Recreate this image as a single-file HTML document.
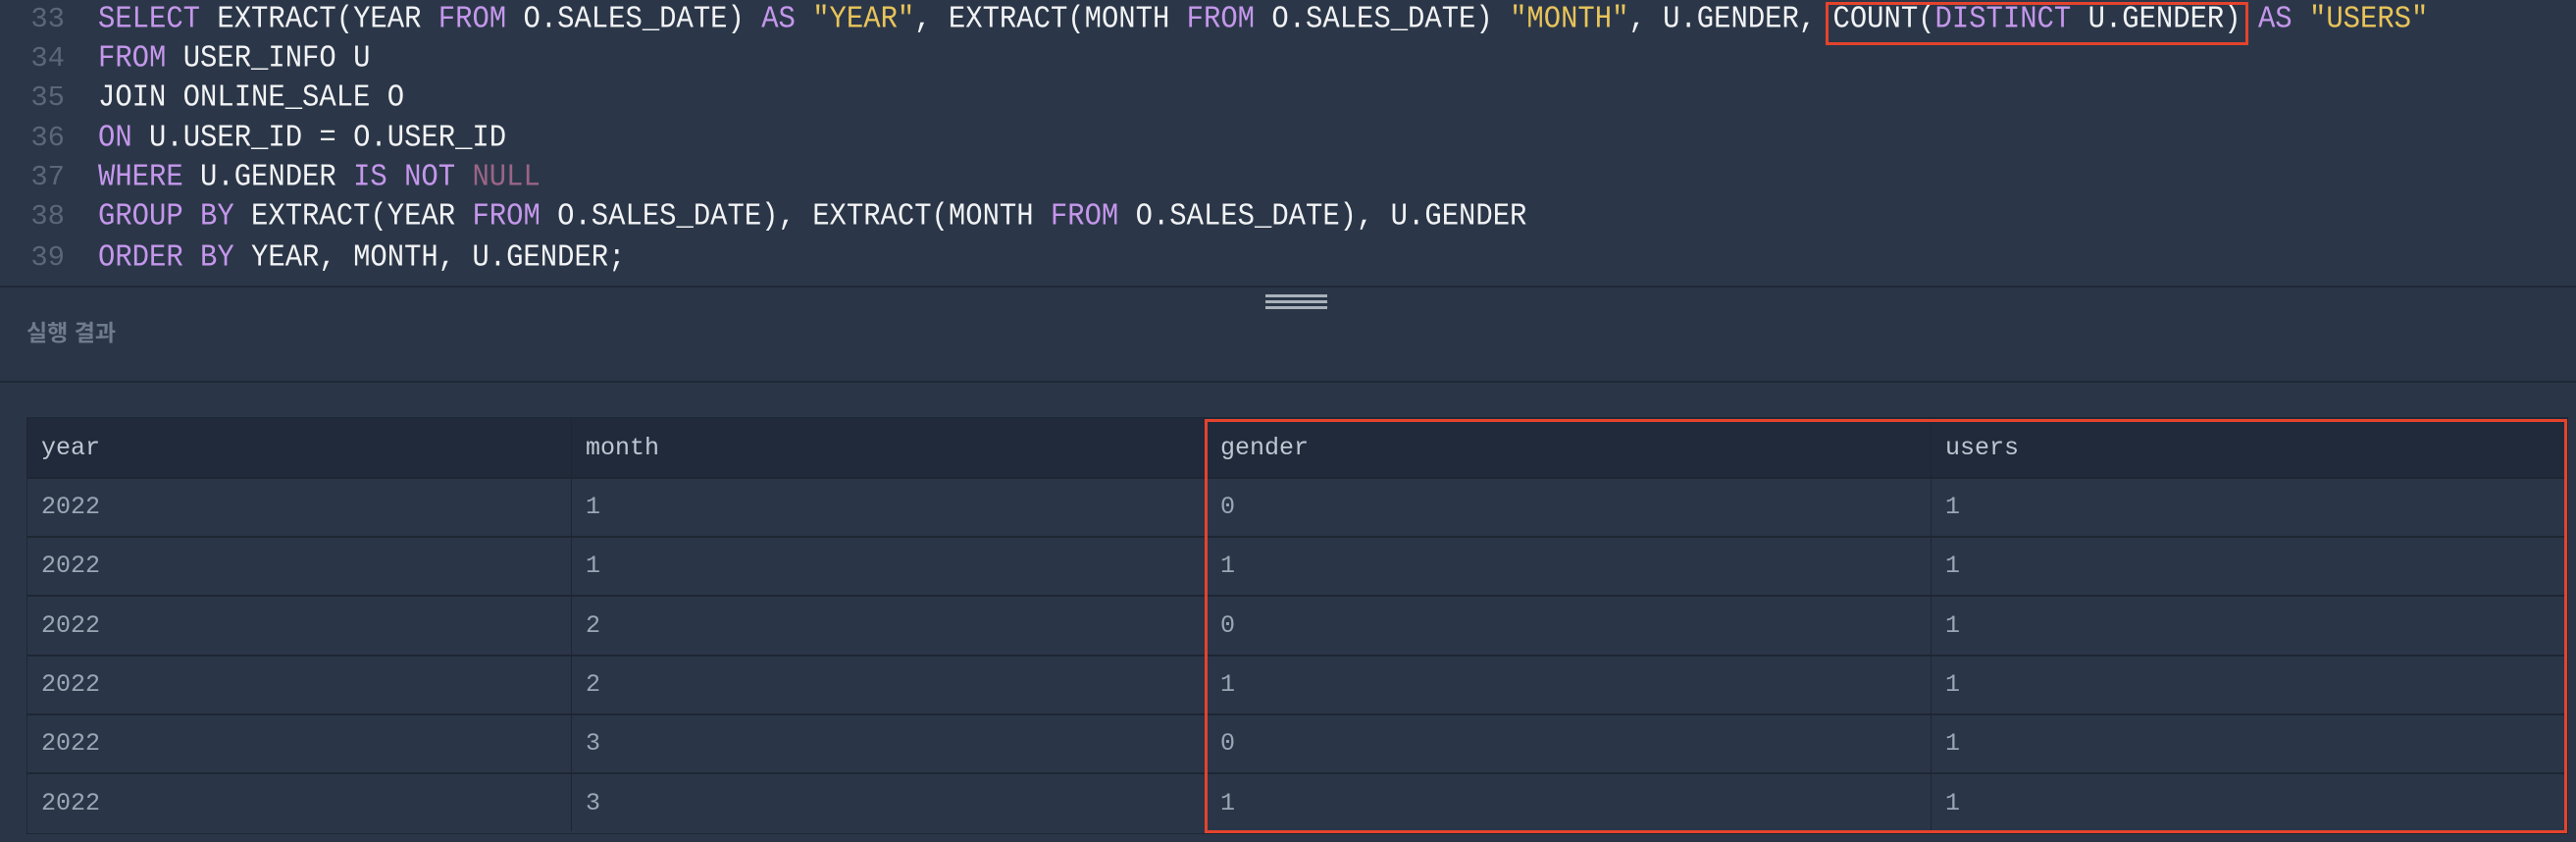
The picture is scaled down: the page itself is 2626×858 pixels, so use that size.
<!DOCTYPE html>
<html><head><meta charset="utf-8"><style>
body{margin:0;width:2626px;height:858px;background:#2a3647;overflow:hidden;position:relative;font-family:"Liberation Mono","Noto Sans CJK KR",monospace}
.ed{position:absolute;left:0;top:0;width:2626px;height:291px;background:#2b3748;border-bottom:2px solid #1f2836}
.ln{position:absolute;left:0;width:66px;text-align:right;color:#5b6779;font-size:28.9px;line-height:40px}
.cd{position:absolute;left:100px;color:#f2f3f5;font-size:28.9px;line-height:40px;white-space:pre;transform:scaleY(1.08);transform-origin:0 50%}
.k{color:#c597ec}.s{color:#e9c45a}.n{color:#9a6587}
.hd{position:absolute;left:1290px;top:300px;width:63px}
.hd div{height:3px;background:#a9b1bb;margin-bottom:3px}
.lbl{position:absolute;left:27px;top:320px;color:#6f7c8d;font-size:23px;font-weight:bold;font-family:"Liberation Sans","Noto Sans CJK KR",sans-serif}
.sep{position:absolute;left:0;top:388px;width:2626px;height:2px;background:#1f2836}
.tb{position:absolute;left:27px;top:425px;width:2589px;height:423px;border:1px solid #1e2633}
.row{position:absolute;left:0;width:2589px;border-bottom:2px solid #1e2633}
.c{position:absolute;top:0;height:100%;display:flex;align-items:center;padding-left:14px;box-sizing:border-box;font-size:25px;color:#9ba6b4;border-left:1px solid #1e2633}
.h .c{color:#bfc7d2}
.rb{position:absolute;border:3px solid #e4432d;box-sizing:border-box}
</style></head><body>
<div class="ed">
<div class="ln" style="top:0">33</div><div class="cd" style="top:0"><span class="k">SELECT</span> EXTRACT(YEAR <span class="k">FROM</span> O.SALES_DATE) <span class="k">AS</span> <span class="s">"YEAR"</span>, EXTRACT(MONTH <span class="k">FROM</span> O.SALES_DATE) <span class="s">"MONTH"</span>, U.GENDER, COUNT(<span class="k">DISTINCT</span> U.GENDER) <span class="k">AS</span> <span class="s">"USERS"</span></div>
<div class="ln" style="top:40px">34</div><div class="cd" style="top:40px"><span class="k">FROM</span> USER_INFO U</div>
<div class="ln" style="top:80px">35</div><div class="cd" style="top:80px">JOIN ONLINE_SALE O</div>
<div class="ln" style="top:121px">36</div><div class="cd" style="top:121px"><span class="k">ON</span> U.USER_ID = O.USER_ID</div>
<div class="ln" style="top:161px">37</div><div class="cd" style="top:161px"><span class="k">WHERE</span> U.GENDER <span class="k">IS NOT</span> <span class="n">NULL</span></div>
<div class="ln" style="top:201px">38</div><div class="cd" style="top:201px"><span class="k">GROUP BY</span> EXTRACT(YEAR <span class="k">FROM</span> O.SALES_DATE), EXTRACT(MONTH <span class="k">FROM</span> O.SALES_DATE), U.GENDER</div>
<div class="ln" style="top:243px">39</div><div class="cd" style="top:243px"><span class="k">ORDER BY</span> YEAR, MONTH, U.GENDER;</div>
<div class="rb" style="left:1861px;top:2px;width:431px;height:44px"></div>
</div>
<div class="hd"><div></div><div></div><div></div></div>
<div class="lbl">실행 결과</div>
<div class="sep"></div>
<div class="tb">
<div class="row h" style="top:0;height:60px;background:#212a3b"><div class="c" style="left:0;width:554px;border-left:0">year</div><div class="c" style="left:554px;width:647px">month</div><div class="c" style="left:1201px;width:739px">gender</div><div class="c" style="left:1940px;width:649px">users</div></div>
<div class="row" style="top:61px;height:59px"><div class="c" style="left:0;width:554px;border-left:0">2022</div><div class="c" style="left:554px;width:647px">1</div><div class="c" style="left:1201px;width:739px">0</div><div class="c" style="left:1940px;width:649px">1</div></div>
<div class="row" style="top:121px;height:59px"><div class="c" style="left:0;width:554px;border-left:0">2022</div><div class="c" style="left:554px;width:647px">1</div><div class="c" style="left:1201px;width:739px">1</div><div class="c" style="left:1940px;width:649px">1</div></div>
<div class="row" style="top:181px;height:60px"><div class="c" style="left:0;width:554px;border-left:0">2022</div><div class="c" style="left:554px;width:647px">2</div><div class="c" style="left:1201px;width:739px">0</div><div class="c" style="left:1940px;width:649px">1</div></div>
<div class="row" style="top:242px;height:59px"><div class="c" style="left:0;width:554px;border-left:0">2022</div><div class="c" style="left:554px;width:647px">2</div><div class="c" style="left:1201px;width:739px">1</div><div class="c" style="left:1940px;width:649px">1</div></div>
<div class="row" style="top:302px;height:59px"><div class="c" style="left:0;width:554px;border-left:0">2022</div><div class="c" style="left:554px;width:647px">3</div><div class="c" style="left:1201px;width:739px">0</div><div class="c" style="left:1940px;width:649px">1</div></div>
<div class="row" style="top:363px;height:58px;border-bottom:0"><div class="c" style="left:0;width:554px;border-left:0">2022</div><div class="c" style="left:554px;width:647px">3</div><div class="c" style="left:1201px;width:739px">1</div><div class="c" style="left:1940px;width:649px">1</div></div>
</div>
<div class="rb" style="left:1228px;top:427px;width:1389px;height:422px"></div>
</body></html>
